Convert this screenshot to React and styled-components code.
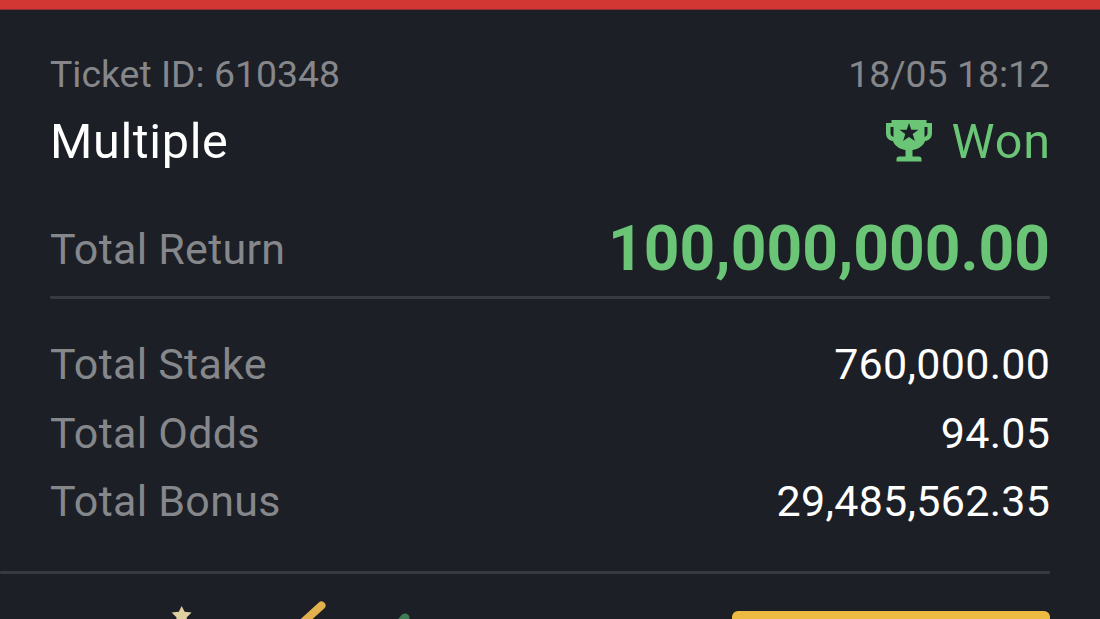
import React from 'react';
import styled, { createGlobalStyle } from 'styled-components';

const Global = createGlobalStyle`
  * { box-sizing: border-box; }
  body { margin: 0; background: #1c1f26; overflow: hidden; }
`;
const Page = styled.main`
  width: 1100px; height: 619px; overflow: hidden;
  display: flex; flex-direction: column;
  background: #1c1f26; color: #fff;
  font-family: Roboto, "Liberation Sans", sans-serif;
`;
const TopBar = styled.div`height: 10px; flex: none; background: #d33733; border-bottom: 1px solid #8e2e33;`;
const Section = styled.section`
  margin: 0 50px; flex: none; display: flex; flex-direction: column;
  padding-top: ${p => p.$top}px; padding-bottom: ${p => p.$bottom || 0}px;
`;
const Row = styled.div`
  display: flex; justify-content: space-between; align-items: center;
  height: ${p => p.$h}px; padding-top: ${p => p.$pt || 0}px; white-space: nowrap;
`;
const Text = styled.span`
  font-size: ${p => p.$size}px; letter-spacing: ${p => p.$ls || 0}px;
  margin-right: ${p => -(p.$ls || 0)}px;
  font-weight: ${p => p.$bold ? 700 : 400}; line-height: 1;
  color: ${p => p.$color || '#85878b'};
`;
const Status = styled.div`display: flex; align-items: center; gap: 19px;`;
const TrophyIcon = styled.svg`display: block; width: 46px; height: 42px; margin-bottom: 3px;`;
const Rule = styled.div`
  height: 3px; flex: none; margin-right: ${p => p.$right || 0}px;
  border-radius: 1px; background: #373a43;
`;
const Footer = styled.footer`
  display: flex; justify-content: space-between; align-items: flex-start;
  height: 45px; flex: none; padding: 0 50px 0 165px; overflow: hidden;
`;
const Button = styled.div`width: 318px; height: 60px; margin-top: 37px; border-radius: 6px; background: #eebb42;`;

const Trophy = () => (
  <TrophyIcon viewBox="0 0 46 42">
    <path fill="#6bc576" fillRule="evenodd" d="M5.500 0h35v3H46v10c0 4-2 7.500-7 8-1.500 4.500-6 8-12.500 9v6.500H33q2.500 0 2.500 2.500v2.500h-25V39q0-2.500 2.500-2.500h6.500V30C13 29 8.500 25.500 7 21c-5-.5-7-4-7-8V3h5.500zM4.500 7v6c0 2 .8 3.300 3 4V7zM38.500 7v10c2.200-.7 3-2 3-4V7zM23 3l-2.300 6.800h-7.200l5.800 4.300-2.200 7 5.900-4.200 5.900 4.200-2.200-7 5.800-4.300h-7.200z" />
  </TrophyIcon>
);
const Decorations = () => (
  <svg width="250" height="45" viewBox="165 574 250 45">
    <path fill="#dfd1a0" d="M181.700 606l2.900 5.800 7 .8-5 4.800 1 5h-12l1-5-5-4.800 7.200-.8z" />
    <path stroke="#e2b04c" strokeWidth="8" strokeLinecap="round" d="M321.500 605.500L300 625" />
    <path stroke="#417b55" strokeWidth="9" strokeLinecap="round" d="M405 618l-5 6" />
  </svg>
);

export default function App() {
  return (
    <Page>
      <Global />
      <TopBar />
      <Section $top={40}>
        <Row $h={50}><Text $size={37.4}>Ticket ID: 610348</Text><Text $size={37.4}>18/05 18:12</Text></Row>
        <Row $h={82} $pt={3}><Text $size={48.5} $ls={0.65} $color="#fff">Multiple</Text><Status><Trophy /><Text $size={48.5} $ls={0.9} $color="#6bc576">Won</Text></Status></Row>
        <Row $h={114} $pt={21}><Text $size={43} $ls={0.27}>Total Return</Text><Text $size={62.3} $bold $color="#6bc576">100,000,000.00</Text></Row>
        <Rule />
      </Section>
      <Section $top={31} $bottom={35}>
        <Row $h={69}><Text $size={43} $ls={0.27}>Total Stake</Text><Text $size={43} $ls={0.3} $color="#fff">760,000.00</Text></Row>
        <Row $h={68}><Text $size={43} $ls={0.27}>Total Odds</Text><Text $size={43} $ls={0.3} $color="#fff">94.05</Text></Row>
        <Row $h={69}><Text $size={43} $ls={0.27}>Total Bonus</Text><Text $size={43} $ls={0.3} $color="#fff">29,485,562.35</Text></Row>
      </Section>
      <Rule $right={50} />
      <Footer><Decorations /><Button /></Footer>
    </Page>
  );
}
